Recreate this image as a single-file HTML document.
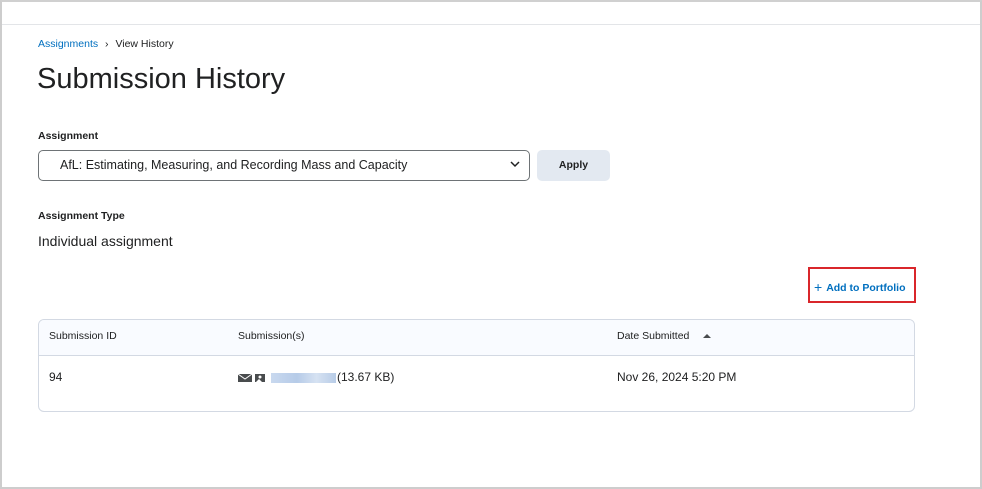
<!DOCTYPE html>
<html><head><style>
body{margin:0;width:982px;height:489px;overflow:hidden;font-family:"Liberation Sans",sans-serif;color:#202122;background:#fff}
.frame{position:absolute;left:0;top:0;width:978px;height:485px;border:2px solid #cdcdcd;border-top:2px solid #d0d0d0}
.hl{position:absolute;left:2px;right:2px;top:24px;height:1px;background:#e3e5e8}
.a{position:absolute;white-space:nowrap}
</style></head><body>
<div class="frame"></div>
<div class="hl"></div>
<div class="a" style="left:38px;top:38px;font-size:10.5px"><span style="color:#006fbf">Assignments</span> <span style="margin:0 4px">›</span> View History</div>
<div class="a" style="left:37px;top:63px;font-size:29px;color:#202122">Submission History</div>
<div class="a" style="left:38px;top:130px;font-size:10.5px;font-weight:bold">Assignment</div>
<div class="a" style="left:38px;top:150px;width:492px;height:31px;border:1px solid #6e7376;border-radius:5px;box-sizing:border-box"></div>
<div class="a" style="left:60px;top:158px;font-size:12.5px">AfL: Estimating, Measuring, and Recording Mass and Capacity</div>
<svg class="a" style="left:510px;top:160px" width="10" height="8"><path d="M1 2l4 4 4-4" stroke="#202122" stroke-width="1.5" fill="none"/></svg>
<div class="a" style="left:537px;top:150px;width:73px;height:31px;background:#e3e9f1;border-radius:5px;font-size:10.5px;font-weight:bold;text-align:center;line-height:31px">Apply</div>
<div class="a" style="left:38px;top:210px;font-size:10.5px;font-weight:bold">Assignment Type</div>
<div class="a" style="left:38px;top:233px;font-size:14px">Individual assignment</div>
<div class="a" style="left:808px;top:267px;width:108px;height:36px;border:2px solid #d9262b;box-sizing:border-box"></div>
<div class="a" style="left:814px;top:278px;font-size:10.5px;font-weight:bold;color:#006fbf"><span style="font-size:14px;font-weight:normal;margin-right:4px;position:relative;top:1px">+</span>Add to Portfolio</div>
<div class="a" style="left:38px;top:319px;width:877px;height:93px;border:1px solid #d3d9e3;border-radius:6px;box-sizing:border-box;overflow:hidden">
<div style="height:35px;background:#f9fbff;border-bottom:1px solid #d3d9e3"></div></div>
<div class="a" style="left:49px;top:330px;font-size:10.5px">Submission ID</div>
<div class="a" style="left:238px;top:330px;font-size:10.5px">Submission(s)</div>
<div class="a" style="left:617px;top:330px;font-size:10.5px">Date Submitted</div>
<svg class="a" style="left:703px;top:333px" width="8" height="6"><path d="M0 5L4 1 8 5z" fill="#494c4e"/></svg>
<div class="a" style="left:49px;top:370px;font-size:12px">94</div>
<svg class="a" style="left:238px;top:373px" width="30" height="10"><rect x="0" y="1" width="14" height="8" fill="#494c4e"/><path d="M0 1l7 5 7-5" stroke="#fff" fill="none"/><rect x="17" y="1" width="10" height="8" fill="#494c4e"/><circle cx="22" cy="4" r="1.5" fill="#fff"/><path d="M18 9l3-3 3 3" fill="#fff"/></svg>
<div class="a" style="left:271px;top:373px;width:65px;height:10px;background:linear-gradient(90deg,#c9d9ef,#b6cbe8 40%,#d6e2f2 70%,#b8cce7)"></div>
<div class="a" style="left:337px;top:370px;font-size:12px">(13.67 KB)</div>
<div class="a" style="left:617px;top:370px;font-size:12px">Nov 26, 2024 5:20 PM</div>
</body></html>
